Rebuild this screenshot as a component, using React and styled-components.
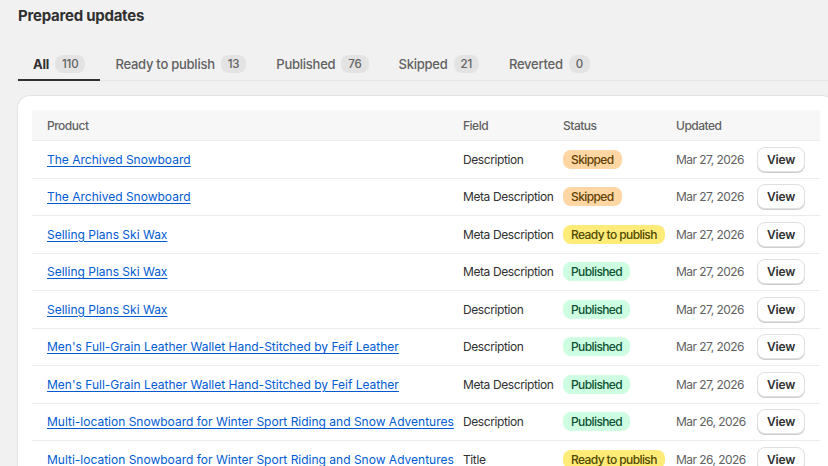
import React from "react";
import styled, { createGlobalStyle } from "styled-components";

const Global = createGlobalStyle`
  html, body { margin: 0; padding: 0; background: #f1f1f1; overflow: hidden; }
  body { font-family: Inter, "Noto Sans", sans-serif; color: #303030; -webkit-font-smoothing: antialiased; }
`;

const Page = styled.div`
  padding: 6px 0 0 18px;
  width: 818px;
`;

const Title = styled.h1`
  margin: 0;
  font-size: 15px;
  letter-spacing: -0.25px;
  line-height: 20px;
  font-weight: 700;
  color: #303030;
`;

const TabBar = styled.div`
  display: flex;
  margin-top: 21px;
  border-bottom: 1px solid #e6e6e6;
`;

const Tab = styled.div`
  display: flex;
  align-items: center;
  gap: 6px;
  padding: 0 15px;
  height: 34px;
  font-size: 13px;
  letter-spacing: -0.25px;
  color: ${(p) => (p.$active ? "#303030" : "#616161")};
  font-weight: ${(p) => (p.$active ? 650 : 450)};
  box-shadow: ${(p) => (p.$active ? "inset 0 -2px 0 #303030" : "none")};
  margin-bottom: -1px;
`;

const Count = styled.span`
  display: inline-flex;
  align-items: center;
  height: 18px;
  padding: 0 7px;
  border-radius: 8px;
  background: #e3e3e3;
  color: #616161;
  font-size: 11.5px;
  letter-spacing: -0.2px;
  font-weight: 450;
`;

const Card = styled.div`
  margin-top: 15px;
  width: 816px;
  background: #fff;
  border-radius: 12px;
  box-shadow: 0 0 0 1px #e3e3e3, 0 1px 0 rgba(0,0,0,0.05);
  padding: 14px 14px 0 14px;
  box-sizing: border-box;
`;

const Table = styled.table`
  width: 788px;
  border-collapse: collapse;
  table-layout: fixed;
  font-size: 12px;
`;

const Th = styled.th`
  text-align: left;
  font-weight: 500;
  letter-spacing: -0.5px;
  color: #616161;
  background: #f7f7f7;
  height: 30px;
  padding: 0 0 0 ${(p) => p.$pl ?? 15}px;
  border-bottom: 1px solid #ebebeb;
`;

const Tr = styled.tr`
  border-bottom: 1px solid #ebebeb;
`;

const Td = styled.td`
  padding: 5.75px ${(p) => p.$pr ?? 0}px 5.75px ${(p) => p.$pl ?? 15}px;
  height: 25px;
  vertical-align: middle;
  white-space: nowrap;
  overflow: visible;
  letter-spacing: ${(p) => p.$ls ?? -0.4}px;
  color: ${(p) => (p.$muted ? "#616161" : "#303030")};
`;

const Link = styled.a`
  color: #005bd3;
  letter-spacing: 0;
  text-decoration: underline;
  text-underline-offset: 2px;
  cursor: pointer;
`;

const tones = {
  Skipped: ["#ffd6a4", "#5e4200"],
  Published: ["#cdfee1", "#0c5132"],
  "Ready to publish": ["#ffeb78", "#4f4700"],
};

const Badge = styled.span`
  display: inline-flex;
  align-items: center;
  height: 19px;
  padding: 0 8px;
  border-radius: 8px;
  font-weight: 500;
  letter-spacing: -0.6px;
  background: ${(p) => tones[p.$status][0]};
  color: ${(p) => tones[p.$status][1]};
`;

const Button = styled.button`
  font-family: inherit;
  font-size: 12px;
  letter-spacing: -0.2px;
  font-weight: 600;
  color: #303030;
  background: #fff;
  width: 48px;
  height: 25px;
  border-radius: 8px;
  border: 1px solid #e0e0e0;
  box-shadow: 0 1px 0 #cfcfcf;
  padding: 0;
`;

const rows = [
  ["The Archived Snowboard", "Description", "Skipped", "Mar 27, 2026"],
  ["The Archived Snowboard", "Meta Description", "Skipped", "Mar 27, 2026"],
  ["Selling Plans Ski Wax", "Meta Description", "Ready to publish", "Mar 27, 2026"],
  ["Selling Plans Ski Wax", "Meta Description", "Published", "Mar 27, 2026"],
  ["Selling Plans Ski Wax", "Description", "Published", "Mar 27, 2026"],
  ["Men's Full-Grain Leather Wallet Hand-Stitched by Feif Leather", "Description", "Published", "Mar 27, 2026"],
  ["Men's Full-Grain Leather Wallet Hand-Stitched by Feif Leather", "Meta Description", "Published", "Mar 27, 2026"],
  ["Multi-location Snowboard for Winter Sport Riding and Snow Adventures", "Description", "Published", "Mar 26, 2026"],
  ["Multi-location Snowboard for Winter Sport Riding and Snow Adventures", "Title", "Ready to publish", "Mar 26, 2026"],
];

const tabs = [
  ["All", 110],
  ["Ready to publish", 13],
  ["Published", 76],
  ["Skipped", 21],
  ["Reverted", 0],
];

export default function App() {
  return (
    <>
      <Global />
      <Page>
        <Title>Prepared updates</Title>
        <TabBar>
          {tabs.map(([label, n], i) => (
            <Tab key={label} $active={i === 0}>
              {label}
              <Count>{n}</Count>
            </Tab>
          ))}
        </TabBar>
        <Card>
          <Table>
            <colgroup>
              <col style={{ width: 416 }} />
              <col style={{ width: 100 }} />
              <col style={{ width: 113 }} />
              <col style={{ width: 96 }} />
              <col style={{ width: 63 }} />
            </colgroup>
            <thead>
              <tr>
                <Th>Product</Th>
                <Th>Field</Th>
                <Th>Status</Th>
                <Th>Updated</Th>
                <Th $pl={0}></Th>
              </tr>
            </thead>
            <tbody>
              {rows.map(([p, f, s, d], i) => (
                <Tr key={i}>
                  <Td $ls={0}><Link>{p}</Link></Td>
                  <Td>{f}</Td>
                  <Td><Badge $status={s}>{s}</Badge></Td>
                  <Td $muted $ls={-0.55}>{d}</Td>
                  <Td $pl={0} $pr={15}><Button>View</Button></Td>
                </Tr>
              ))}
            </tbody>
          </Table>
        </Card>
      </Page>
    </>
  );
}
